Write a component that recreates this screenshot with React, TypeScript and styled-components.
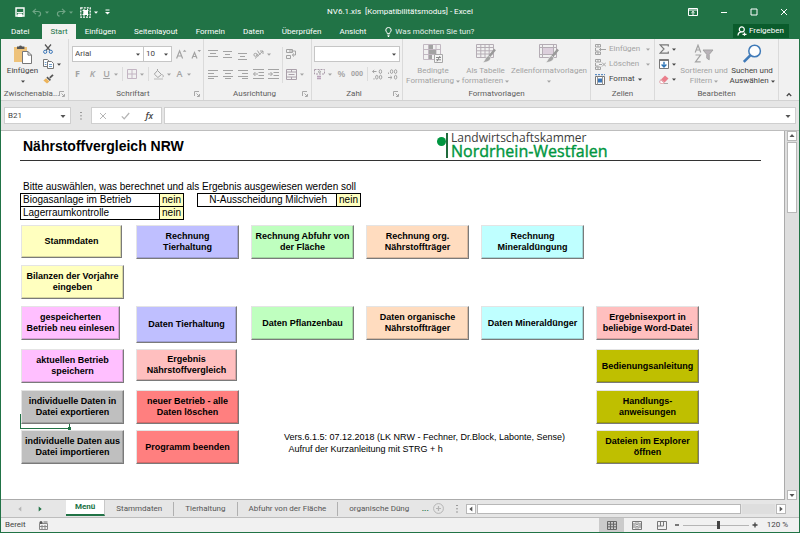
import React from "react";
import styled, { createGlobalStyle, css } from "styled-components";

const GREEN = "#217346";
const UI_FONT = `Roboto, "Open Sans", sans-serif`;
const CELL_FONT = `"Liberation Sans", Arial, sans-serif`;

const GlobalStyle = createGlobalStyle`
  *, *::before, *::after { box-sizing: border-box; }
  body { margin: 0; background: #fff; }
  button, input, select { font: inherit; color: inherit; margin: 0; padding: 0; border: 0; background: none; }
  svg { display: block; flex: none; }
`;

const Window = styled.div`
  display: flex;
  flex-direction: column;
  height: 100vh;
  min-height: 533px;
  background: #e6e6e6;
  border: 1px solid ${GREEN};
  border-top: 0;
  font-family: ${UI_FONT};
  font-size: 8px;
  line-height: 10px;
  color: #444;
`;

/* ---------- title bar and ribbon tabs ---------- */

const TitleBar = styled.header`
  display: grid;
  grid-template-columns: 1fr auto 1fr;
  align-items: center;
  height: 24px;
  background: ${GREEN};
  color: #fff;
`;

const QuickAccess = styled.div`
  display: flex;
  align-items: center;
  gap: 7px;
  padding-left: 14px;
`;

const WindowControls = styled.div`
  display: flex;
  justify-content: flex-end;
  align-items: center;
  gap: 22px;
  padding-right: 11px;
`;

const IconButton = styled.button<{ $dim?: boolean }>`
  display: flex;
  align-items: center;
  gap: 3px;
  color: ${(p) => (p.$dim ? "#6fa585" : "inherit")};
`;

const WindowTitle = styled.h1`
  margin: 0;
  font-size: 8px;
  font-weight: 400;
  white-space: pre;
`;

const RibbonTabs = styled.nav`
  display: flex;
  align-items: stretch;
  height: 15px;
  background: ${GREEN};
  color: #fff;
`;

const RibbonTab = styled.button<{ $active?: boolean; $wide?: boolean }>`
  padding: 0 ${(p) => (p.$active ? 8 : 9)}px;
  ${(p) => p.$wide && css`padding: 0 13px 0 10px;`}
  ${(p) => p.$active && css`background: #f3f2f1; color: ${GREEN};`}
`;

const TellMe = styled.label`
  display: flex;
  align-items: center;
  gap: 3px;
  margin-left: 10px;

  input { width: 100px; outline: 0; }
  input::placeholder { color: #e3efe8; opacity: 1; }
`;

const ShareButton = styled.button`
  display: flex;
  align-items: center;
  gap: 2px;
  margin: 0 10px 1px auto;
  padding: 0 5px 0 4px;
  background: #0a5c2c;
`;

/* ---------- ribbon ---------- */

const Ribbon = styled.section`
  display: flex;
  height: 62px;
  background: #f1f1f1;
  border-bottom: 1px solid #d2d2d2;
`;

const Group = styled.section<{ $width: number }>`
  display: flex;
  flex-direction: column;
  width: ${(p) => p.$width}px;
  flex: none;
  padding-top: 3px;
  border-right: 1px solid #dadada;
`;

const GroupBody = styled.div<{ $gap?: number; $pad?: number }>`
  display: flex;
  flex: 1;
  gap: ${(p) => p.$gap ?? 0}px;
  padding: 0 ${(p) => p.$pad ?? 3}px;
`;

const GroupFooter = styled.footer`
  display: flex;
  align-items: center;
  justify-content: center;
  height: 13px;
  padding: 0 3px;
  color: #5c5c5c;
  white-space: nowrap;

  span { flex: 1; text-align: center; }
`;

const ToolColumn = styled.div<{ $dense?: boolean }>`
  display: flex;
  flex-direction: column;
  gap: ${(p) => (p.$dense ? 1 : 4)}px;
  flex: 1;
  padding-top: ${(p) => (p.$dense ? 0 : 4)}px;
`;

const ToolRow = styled.div`
  display: flex;
  align-items: center;
  gap: 4px;
  height: 16px;
`;

const Tool = styled.button<{ $off?: boolean }>`
  display: flex;
  align-items: center;
  justify-content: center;
  gap: 3px;
  min-width: 11px;
  height: 14px;
  white-space: nowrap;
  color: ${(p) => (p.$off ? "#a3a3a3" : "#444")};
`;

const Letter = styled.span<{ $kind?: "bold" | "italic" | "underline" }>`
  min-width: 9px;
  font-family: "Open Sans", sans-serif;
  font-size: 9px;
  font-weight: 600;
  text-align: center;
  ${(p) => p.$kind === "bold" && css`font-weight: 700;`}
  ${(p) => p.$kind === "italic" && css`font-style: italic;`}
  ${(p) => p.$kind === "underline" && css`text-decoration: underline;`}
`;

const SmallDigits = styled.span`
  font-size: 7px;
  font-weight: 700;
`;

const BigTool = styled.button<{ $off?: boolean; $width: number }>`
  display: flex;
  flex-direction: column;
  align-items: center;
  width: ${(p) => p.$width}px;
  flex: none;
  white-space: nowrap;
  color: ${(p) => (p.$off ? "#a3a3a3" : "#444")};

  > svg { margin: 2px 0; }
`;

const CaptionLine = styled.span`
  display: flex;
  align-items: center;
  gap: 2px;
  height: 10px;
`;

const Divider = styled.span<{ $tall?: boolean }>`
  width: 1px;
  height: ${(p) => (p.$tall ? 36 : 14)}px;
  flex: none;
  align-self: center;
  background: #dcdcdc;
`;

const PickerGroup = styled.div`
  display: flex;
`;

const Picker = styled.label<{ $width: number }>`
  display: flex;
  align-items: center;
  width: ${(p) => p.$width}px;
  height: 16px;
  padding: 0 3px 0 1px;
  background: #fff;
  border: 1px solid #c6c6c6;

  & + & { border-left: 0; }
  select { flex: 1; min-width: 0; appearance: none; outline: 0; padding-left: 1px; }
`;

const Collapse = styled.button`
  display: flex;
  flex: 1;
  align-items: flex-end;
  padding: 0 0 3px 7px;
`;

/* ---------- formula bar ---------- */

const FormulaBar = styled.section`
  display: flex;
  align-items: center;
  gap: 2px;
  height: 29px;
  padding: 0 3px;
`;

const Field = styled.div<{ $width?: number }>`
  display: flex;
  align-items: center;
  height: 17px;
  background: #fff;
  border: 1px solid #cfcfcf;
  ${(p) => (p.$width ? css`width: ${p.$width}px;` : css`flex: 1;`)}

  input { flex: 1; min-width: 0; width: 0; outline: 0; padding-left: 3px; }
  > svg { margin-right: 4px; }
`;

const FormulaActions = styled.div`
  display: flex;
  align-items: center;
  justify-content: space-around;
  width: 71px;
  height: 17px;
  background: #fff;
  border: 1px solid #cfcfcf;
`;

const Grip = styled.span`
  display: flex;
  justify-content: center;
  width: 16px;
`;

/* ---------- worksheet ---------- */

const Workspace = styled.div`
  display: flex;
  flex: 1;
  min-height: 0;
  border-top: 1px solid #bdbdbd;
`;

const Sheet = styled.main`
  flex: 1;
  min-width: 0;
  padding: 0 23px 0 19px;
  background: #fff;
  border-right: 1px solid #ababab;
  border-bottom: 1px solid #ababab;
  font-family: ${CELL_FONT};
  color: #000;
`;

const SheetHeader = styled.header`
  display: grid;
  grid-template-columns: 417px 1fr;
  align-items: center;
  height: 30px;
  border-bottom: 1px solid #333;
`;

const SheetTitle = styled.h2`
  margin: 0;
  padding-left: 3px;
  font-size: 14px;
  line-height: 16px;
`;

const Logo = styled.div`
  display: flex;
  align-items: flex-start;
  gap: 3px;
  font-family: "Open Sans", sans-serif;
`;

const LogoText = styled.div`
  display: flex;
  flex-direction: column;
  white-space: nowrap;
  font-size: 12px;
  line-height: 12px;
  color: #3c3c3c;

  strong { font-size: 16px; line-height: 15px; font-weight: 400; color: #009640; -webkit-text-stroke: 0.4px #009640; }
`;

const Intro = styled.p`
  margin: 20px 0 0;
  padding-left: 3px;
  font-size: 10px;
  line-height: 12px;
`;

const Options = styled.div`
  display: flex;
  align-items: flex-start;
  gap: 13px;
  height: 32px;
`;

const OptionTable = styled.table`
  border-collapse: collapse;
  font-size: 10px;
  line-height: 12px;

  th, td { height: 13px; padding: 0 2px; border: 1px solid #000; font-weight: 400; text-align: left; }
  td { width: 24px; background: #ffffc0; text-align: center; }
`;

const OptionLabel = styled.th<{ $right?: boolean }>`
  width: 139px;
  ${(p) => p.$right && css`&& { text-align: right; padding-right: 9px; }`}
`;

const Board = styled.div`
  display: grid;
  grid-template-columns: repeat(6, 115px);
  grid-template-rows: 40px 41px 43px 41px 40px 34px;
  align-items: start;
`;

const Slot = styled.div<{ $col: number; $row: number }>`
  position: relative;
  grid-column: ${(p) => p.$col};
  grid-row: ${(p) => p.$row};
  padding-left: 1px;
`;

const MacroButton = styled.button<{ $tone: string; $width?: number; $height?: number }>`
  position: relative;
  display: flex;
  align-items: center;
  justify-content: center;
  width: ${(p) => p.$width ?? 103}px;
  height: ${(p) => p.$height ?? 34}px;
  background: ${(p) => p.$tone};
  border: 1px solid;
  border-color: #e4e4e4 #7a7a7a #7a7a7a #e4e4e4;
  box-shadow: inset -1px -1px 0 rgba(0, 0, 0, 0.16);
  font-family: ${CELL_FONT};
  font-size: 9px;
  font-weight: 700;
  line-height: 11px;
  white-space: pre;
  color: #000;
`;

const ActiveCell = styled.div`
  position: absolute;
  left: 0;
  top: 24px;
  width: 50px;
  height: 15px;
  border: 1px solid ${GREEN};

  &::after {
    content: "";
    position: absolute;
    right: -2px;
    bottom: -2px;
    width: 3px;
    height: 3px;
    background: ${GREEN};
  }
`;

const VersionNote = styled.p`
  grid-column: 3 / 6;
  grid-row: 6;
  margin: 0;
  padding: 1px 0 0 34px;
  font-size: 9px;
  line-height: 12px;
  white-space: pre;
`;

/* ---------- scroll bars, sheet tabs, status bar ---------- */

const VerticalScroll = styled.div`
  display: flex;
  flex-direction: column;
  align-items: center;
  width: 14px;
  flex: none;
  background: #dedede;
`;

const ScrollArrow = styled.button`
  display: flex;
  align-items: center;
  justify-content: center;
  width: 10px;
  height: 10px;
  flex: none;
  background: #fff;
  border: 1px solid #b8b8b8;
`;

const VerticalThumb = styled.div`
  width: 10px;
  height: 71px;
  margin-top: 1px;
  background: #fff;
  border: 1px solid #b8b8b8;
`;

const Spacer = styled.span`
  flex: 1;
`;

const TabStrip = styled.nav`
  display: flex;
  align-items: stretch;
  height: 18px;
  border-bottom: 1px solid #bdbdbd;
  color: #555;
`;

const SheetNav = styled.div`
  display: flex;
  align-items: center;
  gap: 14px;
  width: 65px;
  padding-left: 16px;
`;

const SheetTab = styled.button<{ $active?: boolean; $last?: boolean }>`
  display: flex;
  align-items: center;
  height: 14px;
  margin-top: 2px;
  padding: 0 11px;
  white-space: nowrap;
  border-right: 1px solid #b0b0b0;
  ${(p) => p.$last && css`padding-right: 8px; border-right: 0;`}
  ${(p) => p.$active && css`
    height: 16px;
    margin-top: 0;
    padding: 0 9px;
    background: #fff;
    border-right-color: #c8c8c8;
    border-bottom: 2px solid ${GREEN};
    color: ${GREEN};
    font-weight: 700;
  `}
`;

const MoreSheets = styled.button`
  width: 16px;
  color: ${GREEN};
  font-weight: 700;
`;

const HorizontalScroll = styled.div`
  display: flex;
  align-items: center;
  flex: 1;
  gap: 1px;
  margin: 0 13px 0 5px;
`;

const HorizontalThumb = styled.div`
  flex: 265;
  height: 10px;
  background: #fff;
  border: 1px solid #b8b8b8;
`;

const HorizontalTrack = styled.div`
  flex: 33;
  height: 10px;
  background: #dedede;
`;

const StatusBar = styled.footer`
  display: flex;
  align-items: center;
  height: 14px;
  padding: 0 11px 0 4px;
  background: #f1f1f1;
`;

const MacroRecord = styled.button`
  margin-left: 13px;
`;

const ViewButton = styled.button<{ $active?: boolean }>`
  display: flex;
  align-items: center;
  justify-content: center;
  width: 25px;
  height: 14px;
  background: ${(p) => (p.$active ? "#cbcbcb" : "transparent")};
`;

const ZoomRange = styled.input`
  appearance: none;
  width: 66px;
  height: 10px;
  margin: 0 3px;
  background: linear-gradient(#b5b5b5, #b5b5b5) center / 100% 1px no-repeat;

  &::-webkit-slider-thumb {
    appearance: none;
    width: 3px;
    height: 8px;
    background: #444;
  }
`;

const ZoomLabel = styled.output`
  width: 30px;
  text-align: right;
  white-space: nowrap;
`;

/* ---------- icons ---------- */

type IconProps = { w: number; h: number; children: React.ReactNode };
const Icon = ({ w, h, children }: IconProps) => (
  <svg width={w} height={h} viewBox={`0 0 ${w} ${h}`} fill="none" stroke="currentColor" aria-hidden="true">
    {children}
  </svg>
);

const Caret = () => (
  <Icon w={4} h={3}><path d="M0 0.5h4L2 2.8z" fill="currentColor" stroke="none" /></Icon>
);

const Launcher = () => (
  <Icon w={6} h={6}><path d="M0.5 5V0.5H5M2.5 2.5l2.5 2.5M5.5 3v2.5H3" stroke="#a8a8a8" /></Icon>
);

const SaveIcon = () => (
  <Icon w={10} h={10}>
    <path d="M1 1h8v8H1z" strokeWidth="1.4" />
    <path d="M2 5.6h6M3 7h4v2.5H3z" fill="currentColor" />
  </Icon>
);

const UndoIcon = ({ redo }: { redo?: boolean }) => (
  <Icon w={10} h={9}>
    <path
      transform={redo ? "matrix(-1 0 0 1 10 0)" : undefined}
      d="M4 0.8L1 3.5l3 2.6M1.2 3.5H6c3.4 0 3.4 4.4 0.4 4.6"
      strokeWidth="1.1"
    />
  </Icon>
);

const TouchIcon = () => (
  <Icon w={11} h={11}>
    <path d="M0.8 0.8h9.4v9.4H0.8z" strokeDasharray="2 1" strokeWidth="1.3" />
    <path d="M2.5 3.5h6M2.5 7.5h6M4 2v7M7.5 2v7" />
    <path d="M4 4.5h3.5v3H4z" fill="currentColor" />
  </Icon>
);

const CustomizeIcon = () => (
  <Icon w={5} h={6}><path d="M0.5 1h4" /><path d="M0 3h5L2.5 5.6z" fill="currentColor" stroke="none" /></Icon>
);

const RibbonOptionsIcon = () => (
  <Icon w={10} h={8}><path d="M0.5 0.5h9v7h-9zM0.5 2h9M5 7V3.4M3.4 4.9L5 3.4l1.6 1.5" /></Icon>
);
const MinimizeIcon = () => <Icon w={8} h={8}><path d="M1 4.5h6" /></Icon>;
const MaximizeIcon = () => <Icon w={8} h={8}><path d="M1 1h6v6H1z" /></Icon>;
const CloseIcon = () => <Icon w={8} h={8}><path d="M1 1l6 6M7 1L1 7" /></Icon>;

const BulbIcon = () => (
  <Icon w={7} h={10}><path d="M2.3 6.6C2.3 5.2 0.8 4.8 0.8 3a2.7 2.5 0 0 1 5.4 0c0 1.8-1.5 2.2-1.5 3.6zM2.4 8.2h2.2M2.8 9.5h1.4" /></Icon>
);
const PersonIcon = () => (
  <Icon w={10} h={10}>
    <circle cx="4.8" cy="3.4" r="2.5" strokeWidth="1.2" />
    <path d="M1 9.6c0-2.4 1.4-3.6 3.4-3.8M5.5 8.4h4M7.5 6.4v3.4" strokeWidth="1.2" />
  </Icon>
);

const PasteIcon = () => (
  <Icon w={20} h={20}>
    <path d="M1 3h13v15H1z" fill="#eec27a" stroke="none" />
    <path d="M4 5V2.5h2a1.6 1.6 0 0 1 3 0h2.4V5z" fill="#555" stroke="none" />
    <path d="M9.5 7.5h5.5l3.5 3.6v8.4h-9z" fill="#fff" stroke="#777" />
    <path d="M15 7.5v3.6h3.5" stroke="#777" />
  </Icon>
);
const CutIcon = () => (
  <Icon w={10} h={10}>
    <path d="M2 0.5l5 6M8 0.5l-5 6" stroke="#555" strokeWidth="1.2" />
    <circle cx="2.2" cy="7.8" r="1.6" stroke="#3a76b8" />
    <circle cx="7.8" cy="7.8" r="1.6" stroke="#3a76b8" />
  </Icon>
);
const CopyIcon = () => (
  <Icon w={11} h={10}>
    <path d="M0.5 0.5h3.8l1.7 1.7v5.3H0.5z" fill="#fff" stroke="#777" />
    <path d="M4.5 2.5h4l2 2v5h-6z" fill="#fff" stroke="#777" />
    <path d="M6 5.5h3M6 7.5h3M1.8 3.5h1.6M1.8 5.5h1.6" stroke="#6d9cca" />
  </Icon>
);
const PainterIcon = () => (
  <Icon w={11} h={10}>
    <path d="M10 0.8L6.8 3.8" stroke="#555" strokeWidth="1.8" />
    <path d="M4.4 2.6l3.6 3.2-1.2 1.2-3.4-3.2z" fill="#555" stroke="none" />
    <path d="M3 4.2l3.4 3.2L4 9.6 0.4 6.4z" fill="#ecb45c" stroke="none" />
  </Icon>
);

const FontSizeIcon = ({ shrink }: { shrink?: boolean }) => (
  <Icon w={11} h={10}>
    <path d={shrink ? "M1 9.5L3.5 3.5 6 9.5M1.9 7.5h3.2" : "M0.6 9.5L3.6 1.8l3 7.7M1.6 7h4"} strokeWidth="1.2" />
    <path d={shrink ? "M6.5 1h3.6L8.3 3z" : "M6.8 2.8h3.6L8.6 0.8z"} fill="currentColor" stroke="none" />
  </Icon>
);

const BordersIcon = () => (
  <Icon w={10} h={10}><path d="M0.5 0.5h9v9h-9zM5 1v8M1 5h8" stroke="#c3b5c3" /></Icon>
);
const FillIcon = () => (
  <Icon w={11} h={11}>
    <path d="M4.5 1.5l4 4-3.6 3-3.6-3.4zM4.5 1.5V0M9.5 5.5c1 1.4 1 2.4 0.2 2.6" />
    <path d="M1 10h9" stroke="#cfcfcf" strokeWidth="1.6" />
  </Icon>
);

const ALIGN_LINES: Record<string, string> = {
  top: "M0 1.5h10M2 4.5h6M0 7.5h10",
  middle: "M0 2.5h9M2 5.5h5M0 8.5h9",
  bottom: "M0 4.5h9M2 7.5h5M0 10.5h9",
  left: "M0 1.5h10M0 4.5h6M0 7.5h10M0 9.5h6",
  center: "M0 1.5h10M2 4.5h6M0 7.5h10M2 9.5h6",
  right: "M0 1.5h10M4 4.5h6M0 7.5h10M4 9.5h6",
  outdent: "M0 0.5h11M5.5 3.5H11M5.5 6.5H11M0 9.5h11M5 5H0.6M2.4 3L0.5 5l1.9 2",
  indent: "M0 0.5h11M5.5 3.5H11M5.5 6.5H11M0 9.5h11M0 5h4.4M2.5 3l1.9 2-1.9 2",
};
const AlignIcon = ({ kind }: { kind: string }) => (
  <Icon w={11} h={11}><path d={ALIGN_LINES[kind]} /></Icon>
);
const OrientationIcon = () => (
  <Icon w={11} h={10}>
    <circle cx="2.4" cy="5.8" r="1.5" />
    <path d="M3.8 4.6l1.6 2.6M4.4 1.5l2.8 4.4M2 9.5L10 2M10 5V2H7" />
  </Icon>
);
const WrapIcon = () => (
  <Icon w={11} h={11}><path d="M0.5 0.5h6v3h-6zM0.5 6.5h4v3h-4zM3 2h6.5v4H6.5M8 4.5L6.3 6 8 7.6" /></Icon>
);
const MergeIcon = () => (
  <Icon w={11} h={11}><path d="M0.5 0.5h10v10h-10zM0.5 3h10M0.5 8h10M5.5 0.5V3M5.5 8v2.5M2.5 5.5h6" stroke="#aaa0aa" /></Icon>
);
const CurrencyIcon = () => (
  <Icon w={11} h={11}>
    <path d="M0.5 0.5h10v4.5h-10z" strokeDasharray="2 1" stroke="#a99aa9" />
    <circle cx="5.5" cy="2.8" r="1" />
    <path d="M3 7.5h4M3 9.5h4" stroke="#b9a1b9" strokeWidth="1.4" />
  </Icon>
);
const DecimalIcon = ({ less }: { less?: boolean }) => (
  <Icon w={11} h={11}>
    <path d={less ? "M1 8.5h4M3.4 7L5 8.5 3.4 10" : "M0.5 2.5h4M2.2 1L0.6 2.5 2.2 4"} />
    <ellipse cx={less ? 4.6 : 8.4} cy="2.6" rx="1.2" ry="1.9" />
    {less ? <ellipse cx="8.6" cy="2.6" rx="1.2" ry="1.9" /> : <ellipse cx="4.8" cy="8.2" rx="1.2" ry="1.9" />}
    <ellipse cx="8.6" cy="8.2" rx="1.2" ry="1.9" />
    <path d={less ? "M1.5 3.5v1.4" : "M2 9.2v1.4"} />
  </Icon>
);

const ConditionalIcon = () => (
  <Icon w={20} h={20}>
    <path d="M0.5 0.5h17v15h-17zM0.5 5.5h17M0.5 10.5h17M5.5 0.5v15M13 0.5v15" stroke="#c2b8c2" />
    <path d="M6 1h4v4H6zM6 6h7v4H6zM6 11h3v4H6z" fill="#a2a2a2" stroke="none" />
    <path d="M11.5 10.5h8v8h-8z" fill="#f5f5f5" stroke="#a8a8a8" />
    <path d="M13 13.5h5M13 15.8h5M17 12l-3 5.4" stroke="#8a8a8a" />
  </Icon>
);
const StyleIcon = ({ grid }: { grid?: boolean }) => (
  <Icon w={20} h={20}>
    <path d="M0.5 0.5h17v13h-17z" stroke="#b5adb5" />
    <path d={grid ? "M0.5 3.5h17M0.5 6.8h17M0.5 10h17M4.8 0.5v13M9 0.5v13M13.2 0.5v13" : "M0.5 3.5h17M3.5 0.5v13M0.5 10.5h17M14.5 0.5v13"} stroke="#b5adb5" />
    {!grid && <path d="M4 4h10v6H4z" fill="#dccfdc" stroke="none" />}
    <path d="M19 5.5l-5.8 7" stroke="#9a9a9a" strokeWidth="2.4" />
    <path d="M12.6 11.8l2.2 2c-0.6 3-3.4 4.6-8 4.4 2.6-1.2 2.2-5.4 5.8-6.4z" fill="#a4a4a4" stroke="#f1f1f1" strokeWidth="0.6" />
  </Icon>
);

const CellsIcon = ({ kind }: { kind: "insert" | "delete" | "format" }) => (
  <Icon w={11} h={11}>
    {kind === "format" ? (
      <>
        <path d="M0.5 2.5h9v8h-9z" fill="#fff" stroke="#777" />
        <path d="M2.5 2.5v8M7.5 2.5v8" stroke="#999" />
        <path d="M3 4.5h4v4H3z" fill="#3a76b8" stroke="none" />
        <path d="M0 0.7h10" stroke="#3a76b8" strokeDasharray="2 1" />
      </>
    ) : (
      <>
        <path d="M0.5 0.5h5v2.5h-5zM0.5 8h5v2.5h-5zM3 0.5V3M3 8v2.5M0.5 4v3h3" />
        {kind === "insert" ? <path d="M4 5.5h7M6 4L4.4 5.5 6 7" /> : <path d="M4 5.5h3M7 3.5l4 4M11 3.5l-4 4" />}
      </>
    )}
  </Icon>
);

const SumIcon = () => (
  <Icon w={10} h={10}><path d="M9.3 2.5V0.8H1l4 4.2-4 4.2h8.3V7.5" stroke="#777" strokeWidth="1.2" /></Icon>
);
const FillDownIcon = () => (
  <Icon w={10} h={10}>
    <path d="M0.5 0.5h9v9h-9z" fill="#fff" stroke="#777" />
    <path d="M0.5 1.2h9" stroke="#777" strokeWidth="1.6" />
    <path d="M5 2.8v5M2.6 5.6L5 8l2.4-2.4" stroke="#2e75b6" strokeWidth="1.4" />
  </Icon>
);
const EraserIcon = () => (
  <Icon w={10} h={9}>
    <path d="M6 0.5L9.5 3.6 5.6 7.5 2 4.4z" fill="#ea7f8c" stroke="none" />
    <path d="M1.6 4.8l3.6 3.1-1 0.8H1.8L0.6 7z" fill="#fff" stroke="#d8808a" strokeWidth="0.7" />
    <path d="M5 8.5h4" stroke="#aaa" />
  </Icon>
);
const SortFilterIcon = () => (
  <Icon w={20} h={20}>
    <path d="M1.2 8.5L4 1.2l2.8 7.3M2.2 6h3.6M1.5 11h5L1.5 17.8h5.2" strokeWidth="1.2" />
    <path d="M9 6h10l-3.8 4.4v5.4l-2.4-1.6v-3.8z" fill="#b9b3b9" />
  </Icon>
);
const SearchIcon = () => (
  <Icon w={20} h={20}>
    <circle cx="12.6" cy="7" r="5.8" fill="#fdfdfd" stroke="#3f7ab8" strokeWidth="1.5" />
    <path d="M8.3 11.3L1.8 17.8" stroke="#3f7ab8" strokeWidth="2.6" />
  </Icon>
);

const Chevron = () => <Icon w={6} h={5}><path d="M0.8 4L3 1.6 5.2 4" stroke="#444" strokeWidth="1.3" /></Icon>;
const Dots = () => (
  <Icon w={2} h={8}><path d="M0 0.5h2M0 3.8h2M0 7h2" stroke="#999" /></Icon>
);
const Arrow = ({ dir, tone = "#555" }: { dir: "up" | "down" | "left" | "right"; tone?: string }) => {
  const paths = { up: "M0.5 4L3 1l2.5 3z", down: "M0.5 2L3 5l2.5-3z", left: "M4.3 0.5L1.3 3l3 2.5z", right: "M1.7 0.5L4.7 3l-3 2.5z" };
  return <Icon w={6} h={6}><path d={paths[dir]} fill={tone} stroke="none" /></Icon>;
};
const AddSheetIcon = () => (
  <Icon w={11} h={11}><circle cx="5.5" cy="5.5" r="4.9" stroke="#b4b4b4" /><path d="M5.5 3v5M3 5.5h5" stroke="#b4b4b4" strokeWidth="1.2" /></Icon>
);
const MacroIcon = () => (
  <Icon w={9} h={9}>
    <path d="M0.5 2.5h8v6h-8zM3 4v4.5M6 4v4.5M0.5 5.5h8" stroke="#888" />
    <circle cx="2" cy="1.6" r="1.5" fill="#555" stroke="none" />
    <path d="M4.5 1h4" stroke="#666" />
  </Icon>
);
const NormalViewIcon = () => (
  <Icon w={10} h={9}><path d="M0.5 0.5h9v8h-9zM0.5 3.2h9M0.5 5.8h9M3.5 0.5v8M6.5 0.5v8" stroke="#666" /></Icon>
);
const PageViewIcon = () => (
  <Icon w={10} h={9}><path d="M0.5 0.5h9v8h-9z" stroke="#777" /><path d="M3 2h4v5H3zM4 3.5h2M4 5.5h2M1.8 2v5M8.2 2v5" stroke="#999" /></Icon>
);
const BreakViewIcon = () => (
  <Icon w={10} h={9}><path d="M0.5 0.5h9v8h-9zM3.5 0.5v4.5h3V0.5M0.5 5h3" stroke="#777" /></Icon>
);

/* ---------- data ---------- */

const TONES = {
  yellow: "#ffffbf",
  lavender: "#bfbfff",
  green: "#bfffbf",
  peach: "#ffdcbf",
  cyan: "#bfffff",
  pink: "#ffbfff",
  salmon: "#ffbfbf",
  grey: "#bfbfbf",
  red: "#ff7f7f",
  olive: "#bfbf00",
};

type Macro = { text: string; tone: keyof typeof TONES; col: number; row: number; w?: number; h?: number; cell?: boolean };

const MACROS: Macro[] = [
  { text: "Stammdaten", tone: "yellow", col: 1, row: 1, w: 101, h: 33 },
  { text: "Rechnung\nTierhaltung", tone: "lavender", col: 2, row: 1 },
  { text: "Rechnung Abfuhr von\nder Fläche", tone: "green", col: 3, row: 1 },
  { text: "Rechnung org.\nNährstoffträger", tone: "peach", col: 4, row: 1 },
  { text: "Rechnung\nMineraldüngung", tone: "cyan", col: 5, row: 1 },
  { text: "Bilanzen der Vorjahre\neingeben", tone: "yellow", col: 1, row: 2 },
  { text: "gespeicherten\nBetrieb neu einlesen", tone: "pink", col: 1, row: 3, w: 99 },
  { text: "Daten Tierhaltung", tone: "lavender", col: 2, row: 3, w: 101, h: 37 },
  { text: "Daten Pflanzenbau", tone: "green", col: 3, row: 3 },
  { text: "Daten organische\nNährstoffträger", tone: "peach", col: 4, row: 3 },
  { text: "Daten Mineraldünger", tone: "cyan", col: 5, row: 3 },
  { text: "Ergebnisexport in\nbeliebige Word-Datei", tone: "salmon", col: 6, row: 3 },
  { text: "aktuellen Betrieb\nspeichern", tone: "pink", col: 1, row: 4 },
  { text: "Ergebnis\nNährstoffvergleich", tone: "salmon", col: 2, row: 4, w: 101, h: 32 },
  { text: "Bedienungsanleitung", tone: "olive", col: 6, row: 4 },
  { text: "individuelle Daten in\nDatei exportieren", tone: "grey", col: 1, row: 5, cell: true },
  { text: "neuer Betrieb - alle\nDaten löschen", tone: "red", col: 2, row: 5 },
  { text: "Handlungs-\nanweisungen", tone: "olive", col: 6, row: 5 },
  { text: "individuelle Daten aus\nDatei importieren", tone: "grey", col: 1, row: 6 },
  { text: "Programm beenden", tone: "red", col: 2, row: 6 },
  { text: "Dateien im Explorer\nöffnen", tone: "olive", col: 6, row: 6 },
];

const TABS = ["Einfügen", "Seitenlayout", "Formeln", "Daten", "Überprüfen", "Ansicht"];

/* ---------- page ---------- */

const DropTool = ({ label, icon, off = true }: { label: string; icon: React.ReactNode; off?: boolean }) => (
  <Tool $off={off} aria-label={label}>{icon}<Caret /></Tool>
);

function RibbonPanel() {
  return (
    <Ribbon>
      <Group $width={68}>
        <GroupBody $pad={1}>
          <BigTool $width={41}>
            <PasteIcon />
            <CaptionLine>Einfügen</CaptionLine>
            <CaptionLine><Caret /></CaptionLine>
          </BigTool>
          <ToolColumn $dense>
            <Tool aria-label="Ausschneiden"><CutIcon /><Spacer /></Tool>
            <Tool aria-label="Kopieren"><CopyIcon /><Caret /><Spacer /></Tool>
            <Tool aria-label="Format übertragen"><PainterIcon /><Spacer /></Tool>
          </ToolColumn>
        </GroupBody>
        <GroupFooter><span>Zwischenabla...</span><Launcher /></GroupFooter>
      </Group>

      <Group $width={135}>
        <GroupBody>
          <ToolColumn>
            <ToolRow>
              <PickerGroup>
                <Picker $width={72} aria-label="Schriftart"><select defaultValue="Arial"><option>Arial</option></select><Caret /></Picker>
                <Picker $width={28} aria-label="Schriftgrad"><select defaultValue="10"><option>10</option></select><Caret /></Picker>
              </PickerGroup>
              <Tool $off aria-label="Schrift vergrößern"><FontSizeIcon /></Tool>
              <Tool $off aria-label="Schrift verkleinern"><FontSizeIcon shrink /></Tool>
            </ToolRow>
            <ToolRow>
              <Tool $off><Letter $kind="bold">F</Letter></Tool>
              <Tool $off><Letter $kind="italic">K</Letter></Tool>
              <DropTool label="Unterstreichen" icon={<Letter $kind="underline">U</Letter>} />
              <Divider />
              <DropTool label="Rahmen" icon={<BordersIcon />} />
              <Divider />
              <DropTool label="Füllfarbe" icon={<FillIcon />} />
              <DropTool label="Schriftfarbe" icon={<Letter>A</Letter>} />
            </ToolRow>
          </ToolColumn>
        </GroupBody>
        <GroupFooter><span>Schriftart</span><Launcher /></GroupFooter>
      </Group>

      <Group $width={108}>
        <GroupBody $pad={4} $gap={3}>
          <ToolColumn>
            <ToolRow>
              <Tool $off aria-label="Oben"><AlignIcon kind="top" /></Tool>
              <Tool $off aria-label="Mitte"><AlignIcon kind="middle" /></Tool>
              <Tool $off aria-label="Unten"><AlignIcon kind="bottom" /></Tool>
              <DropTool label="Ausrichtung" icon={<OrientationIcon />} />
            </ToolRow>
            <ToolRow>
              <Tool $off aria-label="Links"><AlignIcon kind="left" /></Tool>
              <Tool $off aria-label="Zentriert"><AlignIcon kind="center" /></Tool>
              <Tool $off aria-label="Rechts"><AlignIcon kind="right" /></Tool>
              <Tool $off aria-label="Einzug verkleinern"><AlignIcon kind="outdent" /></Tool>
              <Tool $off aria-label="Einzug vergrößern"><AlignIcon kind="indent" /></Tool>
            </ToolRow>
          </ToolColumn>
          <Divider $tall />
          <ToolColumn>
            <ToolRow><Tool $off aria-label="Textumbruch"><WrapIcon /></Tool></ToolRow>
            <ToolRow><DropTool label="Verbinden" icon={<MergeIcon />} /></ToolRow>
          </ToolColumn>
        </GroupBody>
        <GroupFooter><span>Ausrichtung</span><Launcher /></GroupFooter>
      </Group>

      <Group $width={91}>
        <GroupBody $pad={2}>
          <ToolColumn>
            <ToolRow>
              <Picker $width={86} aria-label="Zahlenformat"><select defaultValue=""><option value=""></option></select><Caret /></Picker>
            </ToolRow>
            <ToolRow>
              <DropTool label="Währung" icon={<CurrencyIcon />} />
              <Tool $off><Letter>%</Letter></Tool>
              <Tool $off><SmallDigits>000</SmallDigits></Tool>
              <Divider />
              <Tool $off aria-label="Dezimalstelle hinzufügen"><DecimalIcon /></Tool>
              <Tool $off aria-label="Dezimalstelle löschen"><DecimalIcon less /></Tool>
            </ToolRow>
          </ToolColumn>
        </GroupBody>
        <GroupFooter><span>Zahl</span><Launcher /></GroupFooter>
      </Group>

      <Group $width={188}>
        <GroupBody $pad={2}>
          <BigTool $off $width={56}>
            <ConditionalIcon />
            <CaptionLine>Bedingte</CaptionLine>
            <CaptionLine>Formatierung<Caret /></CaptionLine>
          </BigTool>
          <BigTool $off $width={49}>
            <StyleIcon grid />
            <CaptionLine>Als Tabelle</CaptionLine>
            <CaptionLine>formatieren<Caret /></CaptionLine>
          </BigTool>
          <BigTool $off $width={78}>
            <StyleIcon />
            <CaptionLine>Zellenformatvorlagen</CaptionLine>
            <CaptionLine><Caret /></CaptionLine>
          </BigTool>
        </GroupBody>
        <GroupFooter><span>Formatvorlagen</span></GroupFooter>
      </Group>

      <Group $width={64}>
        <GroupBody $pad={4}>
          <ToolColumn $dense>
            <Tool $off><CellsIcon kind="insert" />Einfügen<Spacer /><Caret /></Tool>
            <Tool $off><CellsIcon kind="delete" />Löschen<Spacer /><Caret /></Tool>
            <Tool><CellsIcon kind="format" />Format<Caret /><Spacer /></Tool>
          </ToolColumn>
        </GroupBody>
        <GroupFooter><span>Zellen</span></GroupFooter>
      </Group>

      <Group $width={124}>
        <GroupBody $pad={4}>
          <ToolColumn $dense>
            <Tool aria-label="Summe"><SumIcon /><Caret /><Spacer /></Tool>
            <Tool aria-label="Füllbereich"><FillDownIcon /><Caret /><Spacer /></Tool>
            <Tool aria-label="Löschen"><EraserIcon /><Caret /><Spacer /></Tool>
          </ToolColumn>
          <BigTool $off $width={50}>
            <SortFilterIcon />
            <CaptionLine>Sortieren und</CaptionLine>
            <CaptionLine>Filtern<Caret /></CaptionLine>
          </BigTool>
          <BigTool $width={46}>
            <SearchIcon />
            <CaptionLine>Suchen und</CaptionLine>
            <CaptionLine>Auswählen<Caret /></CaptionLine>
          </BigTool>
        </GroupBody>
        <GroupFooter><span>Bearbeiten</span></GroupFooter>
      </Group>
      <Collapse aria-label="Menüband reduzieren"><Chevron /></Collapse>
    </Ribbon>
  );
}

export default function App() {
  return (
    <Window>
      <GlobalStyle />
      <TitleBar>
        <QuickAccess>
          <IconButton aria-label="Speichern"><SaveIcon /></IconButton>
          <IconButton $dim aria-label="Rückgängig"><UndoIcon /><Caret /></IconButton>
          <IconButton $dim aria-label="Wiederholen"><UndoIcon redo /><Caret /></IconButton>
          <IconButton aria-label="Touchmodus"><TouchIcon /><Caret /></IconButton>
          <IconButton aria-label="Anpassen"><CustomizeIcon /></IconButton>
        </QuickAccess>
        <WindowTitle>{"NV6.1.xls  [Kompatibilitätsmodus] - Excel"}</WindowTitle>
        <WindowControls>
          <IconButton aria-label="Menüband-Anzeigeoptionen"><RibbonOptionsIcon /></IconButton>
          <IconButton aria-label="Minimieren"><MinimizeIcon /></IconButton>
          <IconButton aria-label="Maximieren"><MaximizeIcon /></IconButton>
          <IconButton aria-label="Schließen"><CloseIcon /></IconButton>
        </WindowControls>
      </TitleBar>
      <RibbonTabs>
        <RibbonTab $wide>Datei</RibbonTab>
        <RibbonTab $active>Start</RibbonTab>
        {TABS.map((t) => <RibbonTab key={t}>{t}</RibbonTab>)}
        <TellMe><BulbIcon /><input aria-label="Suche" placeholder="Was möchten Sie tun?" /></TellMe>
        <ShareButton><PersonIcon />Freigeben</ShareButton>
      </RibbonTabs>
      <RibbonPanel />

      <FormulaBar>
        <Field $width={67}><input aria-label="Namenfeld" defaultValue="B21" /><Arrow dir="down" /></Field>
        <Grip><Dots /></Grip>
        <FormulaActions>
          <IconButton aria-label="Abbrechen"><Icon w={8} h={8}><path d="M1 1l6 6M7 1L1 7" stroke="#b5b5b5" /></Icon></IconButton>
          <IconButton aria-label="Eingeben"><Icon w={9} h={8}><path d="M0.8 4.4l2.4 2.4L8.2 1" stroke="#b5b5b5" strokeWidth="1.3" /></Icon></IconButton>
          <IconButton aria-label="Funktion einfügen"><Letter $kind="italic">fx</Letter></IconButton>
        </FormulaActions>
        <Field><input aria-label="Bearbeitungsleiste" /><Arrow dir="down" /></Field>
      </FormulaBar>

      <Workspace>
        <Sheet>
          <SheetHeader>
            <SheetTitle>Nährstoffvergleich NRW</SheetTitle>
            <Logo>
              <Icon w={11} h={26}>
                <circle cx="4.5" cy="9.5" r="4.5" fill="#009640" stroke="none" />
                <path d="M10 1v25" stroke="#1f6b3c" strokeWidth="2" />
              </Icon>
              <LogoText><span>Landwirtschaftskammer</span><strong>Nordrhein-Westfalen</strong></LogoText>
            </Logo>
          </SheetHeader>
          <Intro>Bitte auswählen, was berechnet und als Ergebnis ausgewiesen werden soll</Intro>
          <Options>
            <OptionTable>
              <tbody>
                <tr><OptionLabel scope="row">Biogasanlage im Betrieb</OptionLabel><td>nein</td></tr>
                <tr><OptionLabel scope="row">Lagerraumkontrolle</OptionLabel><td>nein</td></tr>
              </tbody>
            </OptionTable>
            <OptionTable>
              <tbody>
                <tr><OptionLabel $right scope="row">N-Ausscheidung Milchvieh</OptionLabel><td>nein</td></tr>
              </tbody>
            </OptionTable>
          </Options>
          <Board>
            {MACROS.map((m) => (
              <Slot key={m.text} $col={m.col} $row={m.row}>
                {m.cell && <ActiveCell />}
                <MacroButton $tone={TONES[m.tone]} $width={m.w} $height={m.h}>{m.text}</MacroButton>
              </Slot>
            ))}
            <VersionNote>{"Vers.6.1.5: 07.12.2018 (LK NRW - Fechner, Dr.Block, Labonte, Sense)\n  Aufruf der Kurzanleitung mit STRG + h"}</VersionNote>
          </Board>
        </Sheet>
        <VerticalScroll>
          <ScrollArrow aria-label="Nach oben"><Arrow dir="up" /></ScrollArrow>
          <VerticalThumb />
          <Spacer />
          <ScrollArrow aria-label="Nach unten"><Arrow dir="down" /></ScrollArrow>
        </VerticalScroll>
      </Workspace>

      <TabStrip>
        <SheetNav>
          <IconButton aria-label="Vorheriges Blatt"><Arrow dir="left" tone="#b5b5b5" /></IconButton>
          <IconButton aria-label="Nächstes Blatt"><Arrow dir="right" tone={GREEN} /></IconButton>
        </SheetNav>
        <SheetTab $active>Menü</SheetTab>
        <SheetTab>Stammdaten</SheetTab>
        <SheetTab>Tierhaltung</SheetTab>
        <SheetTab>Abfuhr von der Fläche</SheetTab>
        <SheetTab $last>organische Düng</SheetTab>
        <MoreSheets>...</MoreSheets>
        <IconButton aria-label="Neues Blatt"><AddSheetIcon /></IconButton>
        <HorizontalScroll>
          <Grip><Dots /></Grip>
          <ScrollArrow aria-label="Nach links"><Arrow dir="left" /></ScrollArrow>
          <HorizontalThumb />
          <HorizontalTrack />
          <ScrollArrow aria-label="Nach rechts"><Arrow dir="right" /></ScrollArrow>
        </HorizontalScroll>
      </TabStrip>

      <StatusBar>
        <span>Bereit</span>
        <MacroRecord aria-label="Makro aufzeichnen"><MacroIcon /></MacroRecord>
        <Spacer />
        <ViewButton $active aria-label="Normal"><NormalViewIcon /></ViewButton>
        <ViewButton aria-label="Seitenlayout"><PageViewIcon /></ViewButton>
        <ViewButton aria-label="Umbruchvorschau"><BreakViewIcon /></ViewButton>
        <IconButton aria-label="Verkleinern"><Icon w={6} h={6}><path d="M1 3h4" stroke="#444" strokeWidth="1.4" /></Icon></IconButton>
        <ZoomRange type="range" aria-label="Zoom" min={0} max={100} defaultValue={54} />
        <IconButton aria-label="Vergrößern"><Icon w={6} h={6}><path d="M0.5 3h5M3 0.5v5" stroke="#444" strokeWidth="1.3" /></Icon></IconButton>
        <ZoomLabel>120 %</ZoomLabel>
      </StatusBar>
    </Window>
  );
}
